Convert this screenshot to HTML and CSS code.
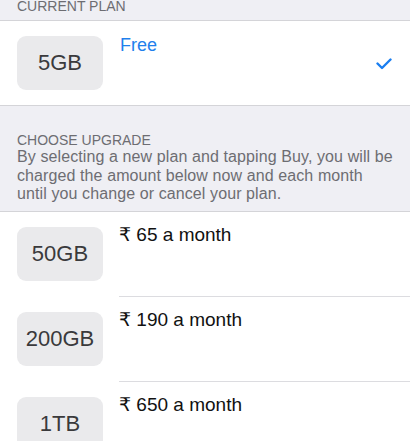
FILE: index.html
```html
<!DOCTYPE html>
<html lang="en">

<head>
    <meta charset="UTF-8">
    <title>Storage Plan</title>
    <link rel="stylesheet" href="styles.css">
</head>

<body>
    <div class="group-title">
        <span class="caption">CURRENT PLAN</span>
    </div>
    <div class="current">
        <div class="size">5GB</div>
        <div class="plan-info">
            <span class="free">Free</span>
        </div>
        <svg class="check" width="16" height="12" viewBox="0 0 16 12">
            <polyline points="1.5,5.5 6,10 14.5,1.5" fill="none" stroke="#1a7ef0" stroke-width="2.4" stroke-linecap="round" stroke-linejoin="round" />
        </svg>
    </div>
    <div class="upgrade-head">
        <div class="caption">CHOOSE UPGRADE</div>
        <div class="note">By selecting a new plan and tapping Buy, you will be charged the amount below now and each month until you change or cancel your plan.</div>
    </div>
    <div class="plans">
        <div class="plan">
            <div class="size">50GB</div>
            <div class="price">₹ 65 a month</div>
        </div>
        <div class="plan">
            <div class="size">200GB</div>
            <div class="price">₹ 190 a month</div>
        </div>
        <div class="plan">
            <div class="size">1TB</div>
            <div class="price">₹ 650 a month</div>
        </div>
    </div>
</body>

</html>
```

FILE: styles.css
```css
body {
    font-family: "Liberation Sans", Arial, "DejaVu Sans", sans-serif;
    margin: 0;
    padding: 0;
    background-color: #efeff4;
    color: #000;
}

.caption {
    font-size: 14px;
    line-height: 16px;
    color: #6d6d72;
}

.group-title {
    height: 20px;
    overflow: hidden;
    padding-left: 17px;
    border-bottom: 1px solid #d4d4d8;
}

.group-title .caption {
    display: block;
    margin-top: -2px;
}

.current {
    background-color: #fff;
    height: 84px;
    display: flex;
    flex-direction: row;
    padding: 0 18px 0 17px;
    border-bottom: 1px solid #d4d4d8;
}

.size {
    width: 86px;
    height: 54px;
    margin-top: 15px;
    border-radius: 9px;
    background-color: #eaeaec;
    color: #3a3a3c;
    font-size: 22px;
    display: flex;
    align-items: center;
    justify-content: center;
    flex-shrink: 0;
}

.plan-info {
    flex: 1;
    margin-left: 17px;
    padding-top: 13px;
}

.free {
    font-size: 18px;
    line-height: 22px;
    color: #1f80ec;
}

.check {
    align-self: center;
    margin-top: 2px;
}

.upgrade-head {
    height: 79px;
    padding: 26px 16px 0 17px;
    border-bottom: 1px solid #d4d4d8;
}

.note {
    font-size: 16px;
    line-height: 18.5px;
    letter-spacing: 0.1px;
    color: #6d6d72;
}

.plans {
    background-color: #fff;
}

.plan {
    display: flex;
    flex-direction: row;
    height: 85px;
    padding-left: 17px;
}

.plan .size {
    align-self: flex-start;
}

.price {
    flex: 1;
    margin-left: 16px;
    padding-top: 12px;
    font-size: 19px;
    line-height: 22px;
    color: #111;
    border-bottom: 1px solid #dcdce0;
}
```
